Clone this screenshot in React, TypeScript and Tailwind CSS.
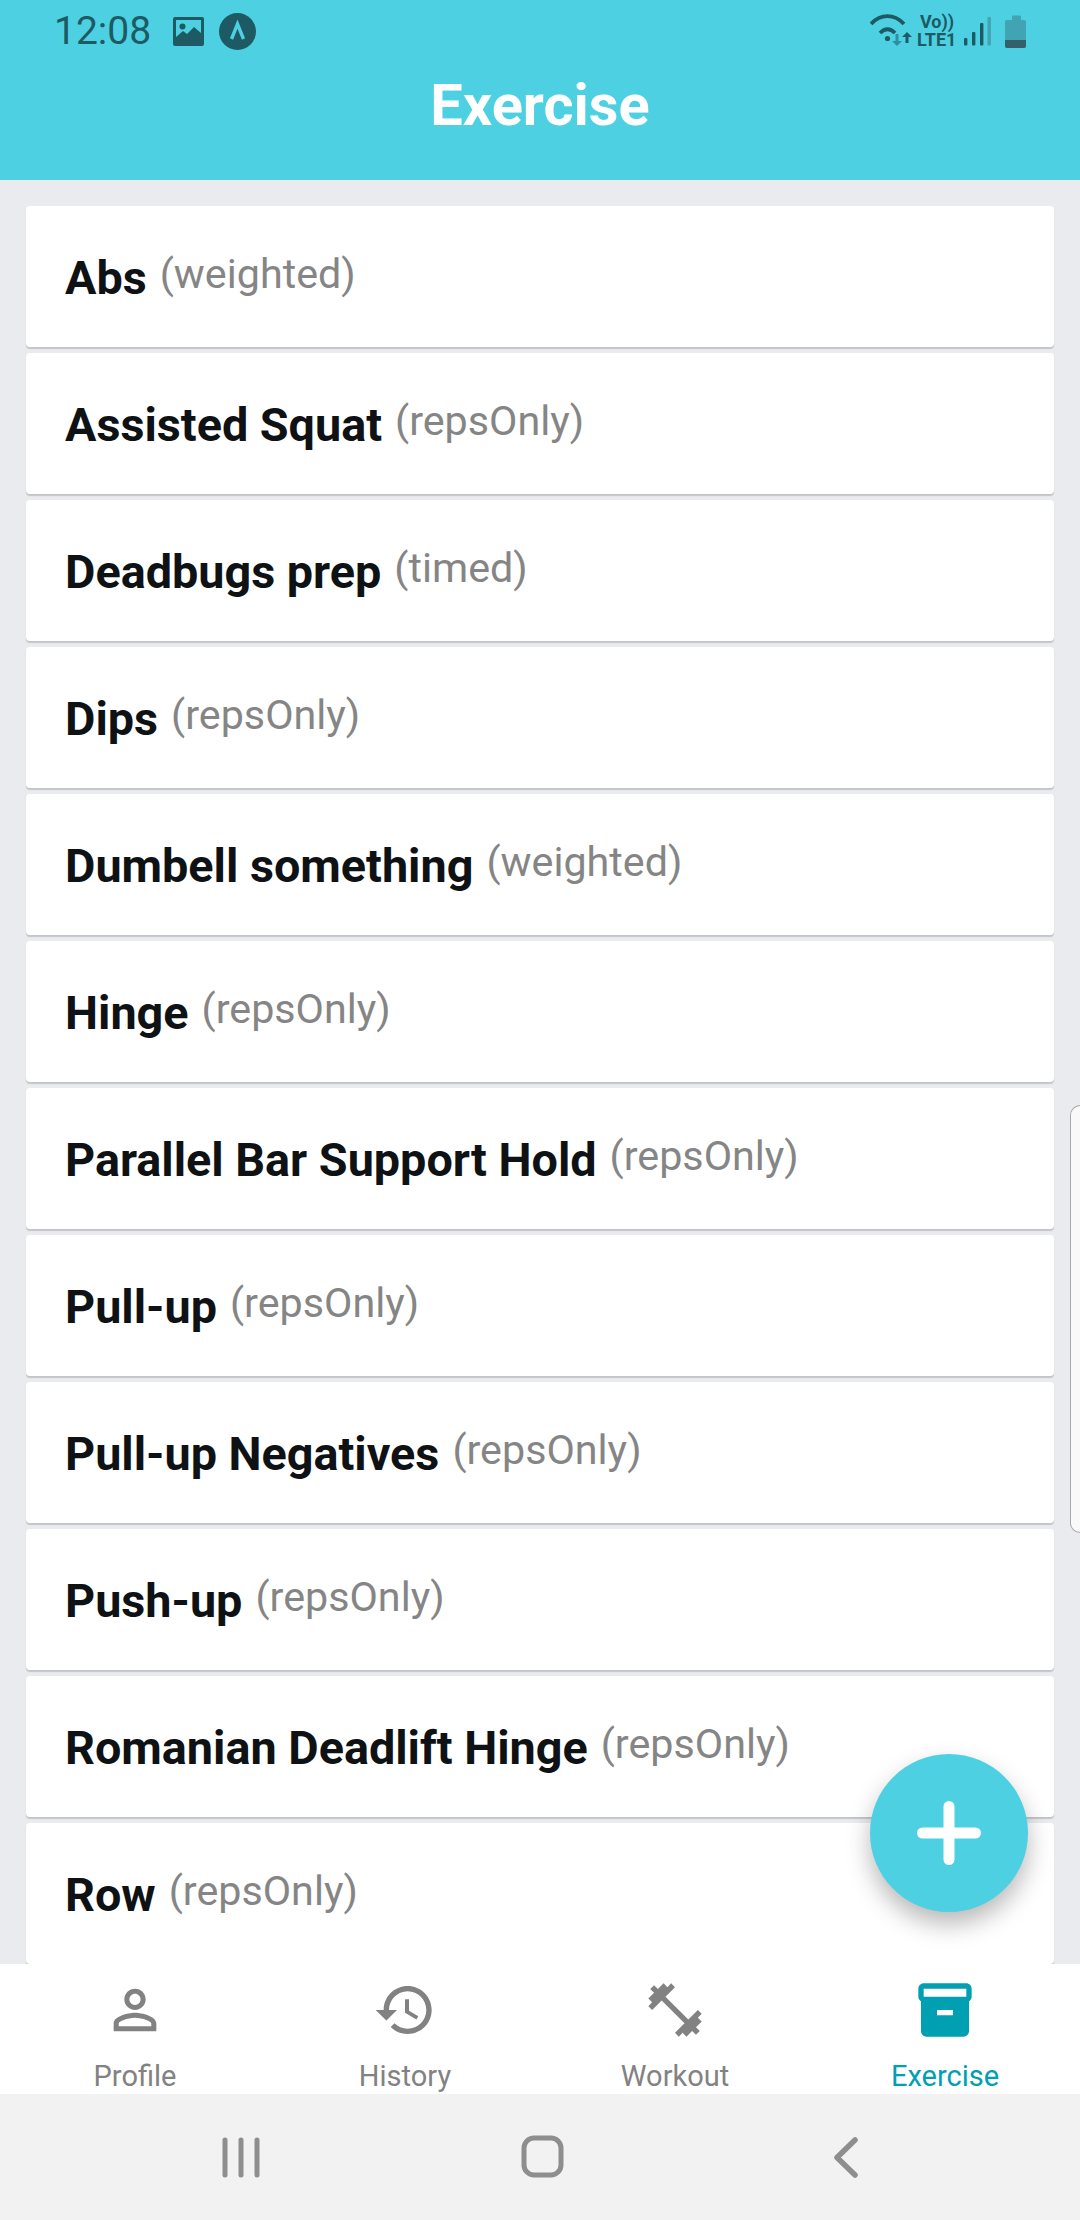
import React from "react";

const exercises = [
  { name: "Abs", kind: "weighted" },
  { name: "Assisted Squat", kind: "repsOnly" },
  { name: "Deadbugs prep", kind: "timed" },
  { name: "Dips", kind: "repsOnly" },
  { name: "Dumbell something", kind: "weighted" },
  { name: "Hinge", kind: "repsOnly" },
  { name: "Parallel Bar Support Hold", kind: "repsOnly" },
  { name: "Pull-up", kind: "repsOnly" },
  { name: "Pull-up Negatives", kind: "repsOnly" },
  { name: "Push-up", kind: "repsOnly" },
  { name: "Romanian Deadlift Hinge", kind: "repsOnly" },
  { name: "Row", kind: "repsOnly" },
];

const tabs = [
  {
    label: "Profile",
    d: "M12 5.9c1.16 0 2.1.94 2.1 2.1s-.94 2.1-2.1 2.1S9.9 9.16 9.9 8s.94-2.1 2.1-2.1m0 9c2.97 0 6.1 1.46 6.1 2.1v1.1H5.9V17c0-.64 3.13-2.1 6.1-2.1M12 4C9.79 4 8 5.79 8 8s1.79 4 4 4 4-1.79 4-4-1.79-4-4-4zm0 9c-2.67 0-8 1.34-8 4v3h16v-3c0-2.66-5.33-4-8-4z",
  },
  {
    label: "History",
    d: "M13 3c-4.97 0-9 4.03-9 9H1l3.89 3.89.07.14L9 12H6c0-3.87 3.13-7 7-7s7 3.13 7 7-3.13 7-7 7c-1.93 0-3.68-.79-4.94-2.06l-1.42 1.42C8.27 19.99 10.51 21 13 21c4.97 0 9-4.03 9-9s-4.03-9-9-9zm-1 5v5l4.28 2.54.72-1.21-3.5-2.08V8H12z",
  },
  {
    label: "Workout",
    d: "M20.57 14.86L22 13.43 20.57 12 17 15.57 8.43 7 12 3.43 10.57 2 9.14 3.43 7.71 2 5.57 4.14 4.14 2.71 2.71 4.14l1.43 1.43L2 7.71l1.43 1.43L2 10.57 3.43 12 7 8.43 15.57 17 12 20.57 13.43 22l1.43-1.43L16.29 22l2.14-2.14 1.43 1.43 1.43-1.43-1.43-1.43L22 16.29z",
  },
  {
    label: "Exercise",
    d: "M20 2H4c-1 0-2 .9-2 2v3.01c0 .72.43 1.34 1 1.69V20c0 1.1 1.1 2 2 2h14c.9 0 2-.9 2-2V8.7c.57-.35 1-.97 1-1.69V4c0-1.1-1-2-2-2zm-5 12H9v-2h6v2zm5-7H4V4h16v3z",
    active: true,
  },
];

const StatusLeftIcons = () => (
  <div className="flex items-center gap-[15px]">
    <svg width="31" height="29" viewBox="0 0 31 29">
      <rect width="31" height="29" rx="2" fill="#1d5a63" />
      <rect x="3" y="3" width="25" height="19" fill="#4dd0e2" />
      <circle cx="9.5" cy="9.5" r="3" fill="#1d5a63" />
      <path d="M3 20l7-6 4 3 7-7 7 6v8H3z" fill="#1d5a63" />
    </svg>
    <svg width="37" height="37" viewBox="0 0 37 37">
      <circle cx="18.5" cy="18.5" r="18.5" fill="#1d5a63" />
      <path d="M12.5 26l6-15 6 15" fill="none" stroke="#4dd0e2" strokeWidth="3.4" />
    </svg>
  </div>
);

const StatusRightIcons = () => (
  <svg width="160" height="40" viewBox="870 12 160 40" className="mr-[50px] mt-[2px]">
    <g fill="none" stroke="#1d5a63" strokeWidth="3.8">
      <path d="M871 24c9.500-10.500 23.500-10.500 33 0" />
      <path d="M880 33c5-5 10-5 15 0" />
    </g>
    <circle cx="887.5" cy="38.500" r="2.600" fill="#1d5a63" />
    <path d="M895.500 34h3v7h3.500l-5 5-5-5h3.500z" fill="#2f8f9f" />
    <path d="M905.500 43v-6h-3.500l5-5 5 5h-3.500v6z" fill="#1d5a63" />
    <text x="920" y="28" fontFamily="Roboto, sans-serif" fontWeight="700" fontSize="18" fill="#1d5a63">Vo))</text>
    <text x="917" y="45.500" fontFamily="Roboto, sans-serif" fontWeight="700" fontSize="18" fill="#1d5a63">LTE1</text>
    <rect x="964" y="38" width="3.400" height="7.600" rx="1" fill="#1d5a63" />
    <rect x="972" y="32" width="3.400" height="13.600" rx="1" fill="#1d5a63" />
    <rect x="980" y="23" width="3.400" height="22.600" rx="1" fill="#1d5a63" />
    <rect x="987.500" y="17" width="3.400" height="28.600" rx="1" fill="#42a3b2" />
    <rect x="1012" y="15.500" width="9" height="6" rx="1" fill="#42a3b2" />
    <rect x="1005" y="20" width="21" height="28" rx="2" fill="#42a3b2" />
    <path d="M1005 40h21v6a2 2 0 0 1-2 2h-17a2 2 0 0 1-2-2z" fill="#355f69" />
  </svg>
);

const Card = ({ name, kind }: { name: string; kind: string }) => (
  <div className="flex h-[141px] shrink-0 items-center gap-[13px] rounded-[4px] bg-white pl-[39px] shadow-[0_2px_1px_rgba(0,0,0,0.16)]">
    <span className="mt-[3px] text-[46.75px] font-bold leading-none text-[#0f1214]">{name}</span>
    <span className="mb-[4px] text-[41.25px] leading-none text-[#858585]">({kind})</span>
  </div>
);

export default function App() {
  return (
    <div className="relative flex h-[2220px] w-[1080px] flex-col overflow-hidden bg-[#eaebef] font-[Roboto,sans-serif]">
      <header className="flex h-[180px] shrink-0 flex-col bg-[#4dd0e2]">
        <div className="flex h-[62px] items-center justify-between pl-[54px]">
          <div className="flex items-center gap-[22px]">
            <span className="text-[39px] leading-none text-[#1d5a63]">12:08</span>
            <StatusLeftIcons />
          </div>
          <StatusRightIcons />
        </div>
        <h1 className="mt-[1px] text-center text-[57.75px] font-bold leading-[84px] text-white">Exercise</h1>
      </header>

      <main className="flex min-h-0 flex-1 flex-col gap-[6px] overflow-hidden px-[26px] pt-[26px]">
        {exercises.map((e) => (
          <Card key={e.name} name={e.name} kind={e.kind} />
        ))}
      </main>

      <nav className="grid h-[130px] shrink-0 grid-cols-4 bg-white">
        {tabs.map((t) => (
          <div key={t.label} className={`flex flex-col items-center pt-[14px] ${t.active ? "text-[#00a0b2]" : "text-[#828282]"}`}>
            <svg width="64" height="64" viewBox="0 0 24 24" fill="currentColor">
              <path d={t.d} />
            </svg>
            <span className="mt-[18px] text-[29px] leading-[32px]">{t.label}</span>
          </div>
        ))}
      </nav>

      <div className="flex h-[126px] shrink-0 items-center justify-around bg-[#f2f2f2]">
        <svg width="660" height="44" viewBox="210 2134 660 44">
          <g fill="none" stroke="#8e8e8e" strokeLinecap="round">
            <path strokeWidth="5" d="M225 2139v35M241 2139v35M257 2139v35" />
            <rect x="524" y="2137" width="37" height="37" rx="10" strokeWidth="5" />
            <path strokeWidth="5.500" d="M855 2139l-18 17.500 18 17.500" strokeLinejoin="round" />
          </g>
        </svg>
      </div>

      {/* edge panel handle */}
      <div className="absolute right-0 top-[1105px] h-[428px] w-[10px] rounded-l-[12px] border border-r-0 border-[#a9a9ab] bg-[#f9f9f9]" />

      <button className="absolute left-[870px] top-[1754px] flex h-[158px] w-[158px] items-center justify-center rounded-full bg-[#4dd0e2] shadow-[0_12px_24px_rgba(0,0,0,0.28)]">
        <svg width="64" height="64" viewBox="0 0 64 64">
          <path d="M32 5.500v53M5.500 32h53" stroke="#fff" strokeWidth="11" strokeLinecap="round" />
        </svg>
      </button>
    </div>
  );
}
